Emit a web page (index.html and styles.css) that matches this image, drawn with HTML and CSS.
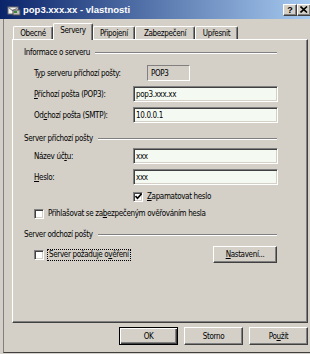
FILE: index.html
```html
<!DOCTYPE html>
<html lang="cs">
<head>
    <meta charset="UTF-8">
    <meta name="viewport" content="width=device-width, initial-scale=1.0">
    <title>pop3.xxx.xx - vlastnosti</title>
    <link rel="stylesheet" href="styles.css">
</head>
<body>
    <div class="window">
        <div class="titlebar">
            <svg class="title-icon" viewBox="0 0 14 12" width="14" height="12">
                <rect x="1" y="3" width="10" height="7" fill="#f4f4f4" stroke="#6f6f6f" stroke-width="1"/>
                <path d="M1.5 3.5 L6 7 L10.5 3.5" fill="none" stroke="#6f6f6f" stroke-width="1"/>
                <rect x="6" y="6" width="7" height="5" fill="#c0c0c0" stroke="#505050" stroke-width="1"/>
                <rect x="7" y="7" width="3" height="2" fill="#3a8a3a"/>
            </svg>
            <span class="title-text">pop3.xxx.xx - vlastnosti</span>
            <div class="title-buttons">
                <span class="tb-btn">?</span>
                <span class="tb-btn">
                    <svg viewBox="0 0 8 7" width="8" height="7">
                        <path d="M0.5 0.5 L7 6.5 M7 0.5 L0.5 6.5" stroke="#000" stroke-width="1.6"/>
                    </svg>
                </span>
            </div>
        </div>

        <div class="frame">
            <div class="tabs">
                <div class="tab tab-obecne">Obecné</div>
                <div class="tab tab-servery active">Servery</div>
                <div class="tab tab-pripojeni">Připojení</div>
                <div class="tab tab-zabezpeceni">Zabezpečení</div>
                <div class="tab tab-upresnit">Upřesnit</div>
            </div>

            <div class="panel">
                <div class="group-title">Informace o serveru</div>
                <div class="row row-first">
                    <label>T<u>y</u>p serveru příchozí pošty:</label>
                    <span class="static-field">POP3</span>
                </div>
                <div class="row">
                    <label for="pop3"><u>P</u>říchozí pošta (POP3):</label>
                    <input class="field" id="pop3" type="text" value="pop3.xxx.xx">
                </div>
                <div class="row">
                    <label for="smtp">Od<u>c</u>hozí pošta (SMTP):</label>
                    <input class="field" id="smtp" type="text" value="10.0.0.1">
                </div>

                <div class="group-title group-gap">Server příchozí pošty</div>
                <div class="row row-after-title">
                    <label for="account">Název úč<u>t</u>u:</label>
                    <input class="field" id="account" type="text" value="xxx">
                </div>
                <div class="row">
                    <label for="password"><u>H</u>eslo:</label>
                    <input class="field" id="password" type="text" value="xxx">
                </div>
                <div class="check-row remember">
                    <span class="check checked">
                        <svg viewBox="0 0 7 7" width="7" height="7">
                            <path d="M0.5 3 L2.5 5.2 L6.5 0.8" fill="none" stroke="#000" stroke-width="1.6"/>
                        </svg>
                    </span>
                    <span class="check-label"><u>Z</u>apamatovat heslo</span>
                </div>
                <div class="check-row secure">
                    <span class="check"></span>
                    <span class="check-label">Přihlašovat se za<u>b</u>ezpečeným ověřováním hesla</span>
                </div>

                <div class="group-title group-gap-small">Server odchozí pošty</div>
                <div class="check-row outgoing">
                    <span class="check"></span>
                    <span class="check-label focused">Server požaduje o<u>v</u>ěření</span>
                    <button class="btn btn-settings"><u>N</u>astavení...</button>
                </div>
            </div>

            <div class="buttons">
                <button class="btn btn-default">OK</button>
                <button class="btn">Storno</button>
                <button class="btn">Po<u>u</u>žít</button>
            </div>
        </div>
    </div>
</body>
</html>
```

FILE: styles.css
```css
body {
    margin: 0;
    width: 310px;
    height: 354px;
    overflow: hidden;
    background-color: #d4d0c8;
    font-family: "DejaVu Sans Condensed", "Liberation Sans", Arial, sans-serif;
    font-size: 8px;
    letter-spacing: -0.35px;
    color: #000;
}

.window {
    height: 353px;
    display: flex;
    flex-direction: column;
}

/* title bar */
.titlebar {
    height: 19px;
    flex: none;
    display: flex;
    align-items: center;
    padding-left: 7px;
    background: linear-gradient(to right, #0a246a, #a6caf0);
    color: #fff;
}

.title-icon {
    margin-right: 2px;
}

.title-text {
    flex: 1;
    font-family: "Liberation Sans", Arial, sans-serif;
    font-weight: bold;
    font-size: 9.5px;
    letter-spacing: 0;
}

.title-buttons {
    display: flex;
    margin-right: -1px;
}

.tb-btn {
    width: 14px;
    height: 12px;
    box-sizing: border-box;
    display: flex;
    align-items: center;
    justify-content: center;
    background-color: #d4d0c8;
    color: #000;
    font-family: "Liberation Sans", Arial, sans-serif;
    font-weight: bold;
    font-size: 9px;
    letter-spacing: 0;
    border: 1px solid;
    border-color: #fff #404040 #404040 #fff;
    box-shadow: inset -1px -1px #808080;
}

/* dialog body */
.frame {
    flex: 1;
    margin-left: 3px;
    padding-left: 8px;
    border-left: 1px solid #808080;
    border-bottom: 1px solid #404040;
}

.tabs {
    display: flex;
    align-items: flex-end;
    height: 16px;
    margin-top: 4px;
    padding-left: 1px;
}

.tab {
    height: 13px;
    box-sizing: border-box;
    display: flex;
    align-items: center;
    justify-content: center;
    border-top: 1px solid #fff;
    border-left: 1px solid #fff;
    border-right: 1px solid #404040;
    border-radius: 2px 2px 0 0;
    box-shadow: inset -1px 0 #808080;
    background-color: #d4d0c8;
}

.tab-obecne { width: 40px; }
.tab-servery { width: 40px; }
.tab-pripojeni { width: 42px; }
.tab-zabezpeceni { width: 60px; }
.tab-upresnit { width: 43px; }

.tab.active {
    height: 17px;
    margin-bottom: -1px;
    position: relative;
    z-index: 1;
    align-items: flex-start;
    padding-top: 2px;
}

.panel {
    width: 296px;
    height: 284px;
    box-sizing: border-box;
    padding: 7px 29px 0 11px;
    border: 1px solid;
    border-color: #fff #404040 #404040 #fff;
    box-shadow: inset -1px -1px #808080;
}

.group-title {
    height: 12px;
    line-height: 12px;
    display: flex;
    align-items: center;
}

.group-title::after {
    content: '';
    flex: 1;
    margin-left: 5px;
    margin-right: 1px;
    border-top: 1px solid #808080;
    border-bottom: 1px solid #fff;
}

.group-gap {
    margin-top: 10px;
}

.group-gap-small {
    margin-top: 9px;
}

.row {
    display: flex;
    align-items: center;
    height: 16px;
    margin-top: 5px;
    padding-left: 10px;
}

.row-first {
    margin-top: 6px;
}

.row-after-title {
    margin-top: 3px;
}

.row label {
    width: 99px;
    flex: none;
    white-space: nowrap;
}

.row-first label {
    width: 113px;
}

.field {
    flex: 1;
    min-width: 0;
    height: 16px;
    box-sizing: border-box;
    margin: 0;
    padding: 0 2px;
    font: inherit;
    letter-spacing: inherit;
    color: #000;
    background-color: #f4faf2;
    border: 1px solid;
    border-color: #808080 #fff #fff #808080;
    box-shadow: inset 1px 1px #404040, inset -1px -1px #d4d0c8;
    outline: none;
}

.static-field {
    width: 43px;
    height: 16px;
    box-sizing: border-box;
    padding-left: 3px;
    display: flex;
    align-items: center;
    border: 1px solid;
    border-color: #808080 #fff #fff #808080;
}

.check-row {
    display: flex;
    align-items: center;
    height: 13px;
}

.remember {
    margin-top: 5px;
    padding-left: 109px;
}

.secure {
    margin-top: 4px;
    padding-left: 10px;
}

.outgoing {
    margin-top: 5px;
    height: 17px;
    padding-left: 10px;
}

.check {
    width: 10px;
    height: 10px;
    box-sizing: border-box;
    flex: none;
    display: flex;
    align-items: center;
    justify-content: center;
    background-color: #fff;
    border: 1px solid;
    border-color: #808080 #fff #fff #808080;
    box-shadow: inset 1px 1px #404040, inset -1px -1px #d4d0c8;
}

.check-label {
    margin-left: 4px;
    white-space: nowrap;
}

.check-label.focused {
    margin-left: 3px;
    padding: 0 1px;
    line-height: 10px;
    border: 1px dotted #000;
}

.btn {
    height: 18px;
    box-sizing: border-box;
    margin: 0;
    padding: 0;
    font: inherit;
    letter-spacing: inherit;
    color: #000;
    background-color: #d4d0c8;
    border: 1px solid;
    border-color: #fff #404040 #404040 #fff;
    box-shadow: inset -1px -1px #808080;
}

.btn-settings {
    width: 64px;
    height: 17px;
    margin-left: auto;
    margin-right: 1px;
}

.buttons {
    width: 296px;
    display: flex;
    justify-content: flex-end;
    gap: 6px;
    margin-top: 4px;
}

.buttons .btn {
    width: 59px;
}

.btn-default {
    border: 1px solid #000;
    box-shadow: inset 1px 1px #fff, inset -1px -1px #404040, inset -2px -2px #808080;
}
```
